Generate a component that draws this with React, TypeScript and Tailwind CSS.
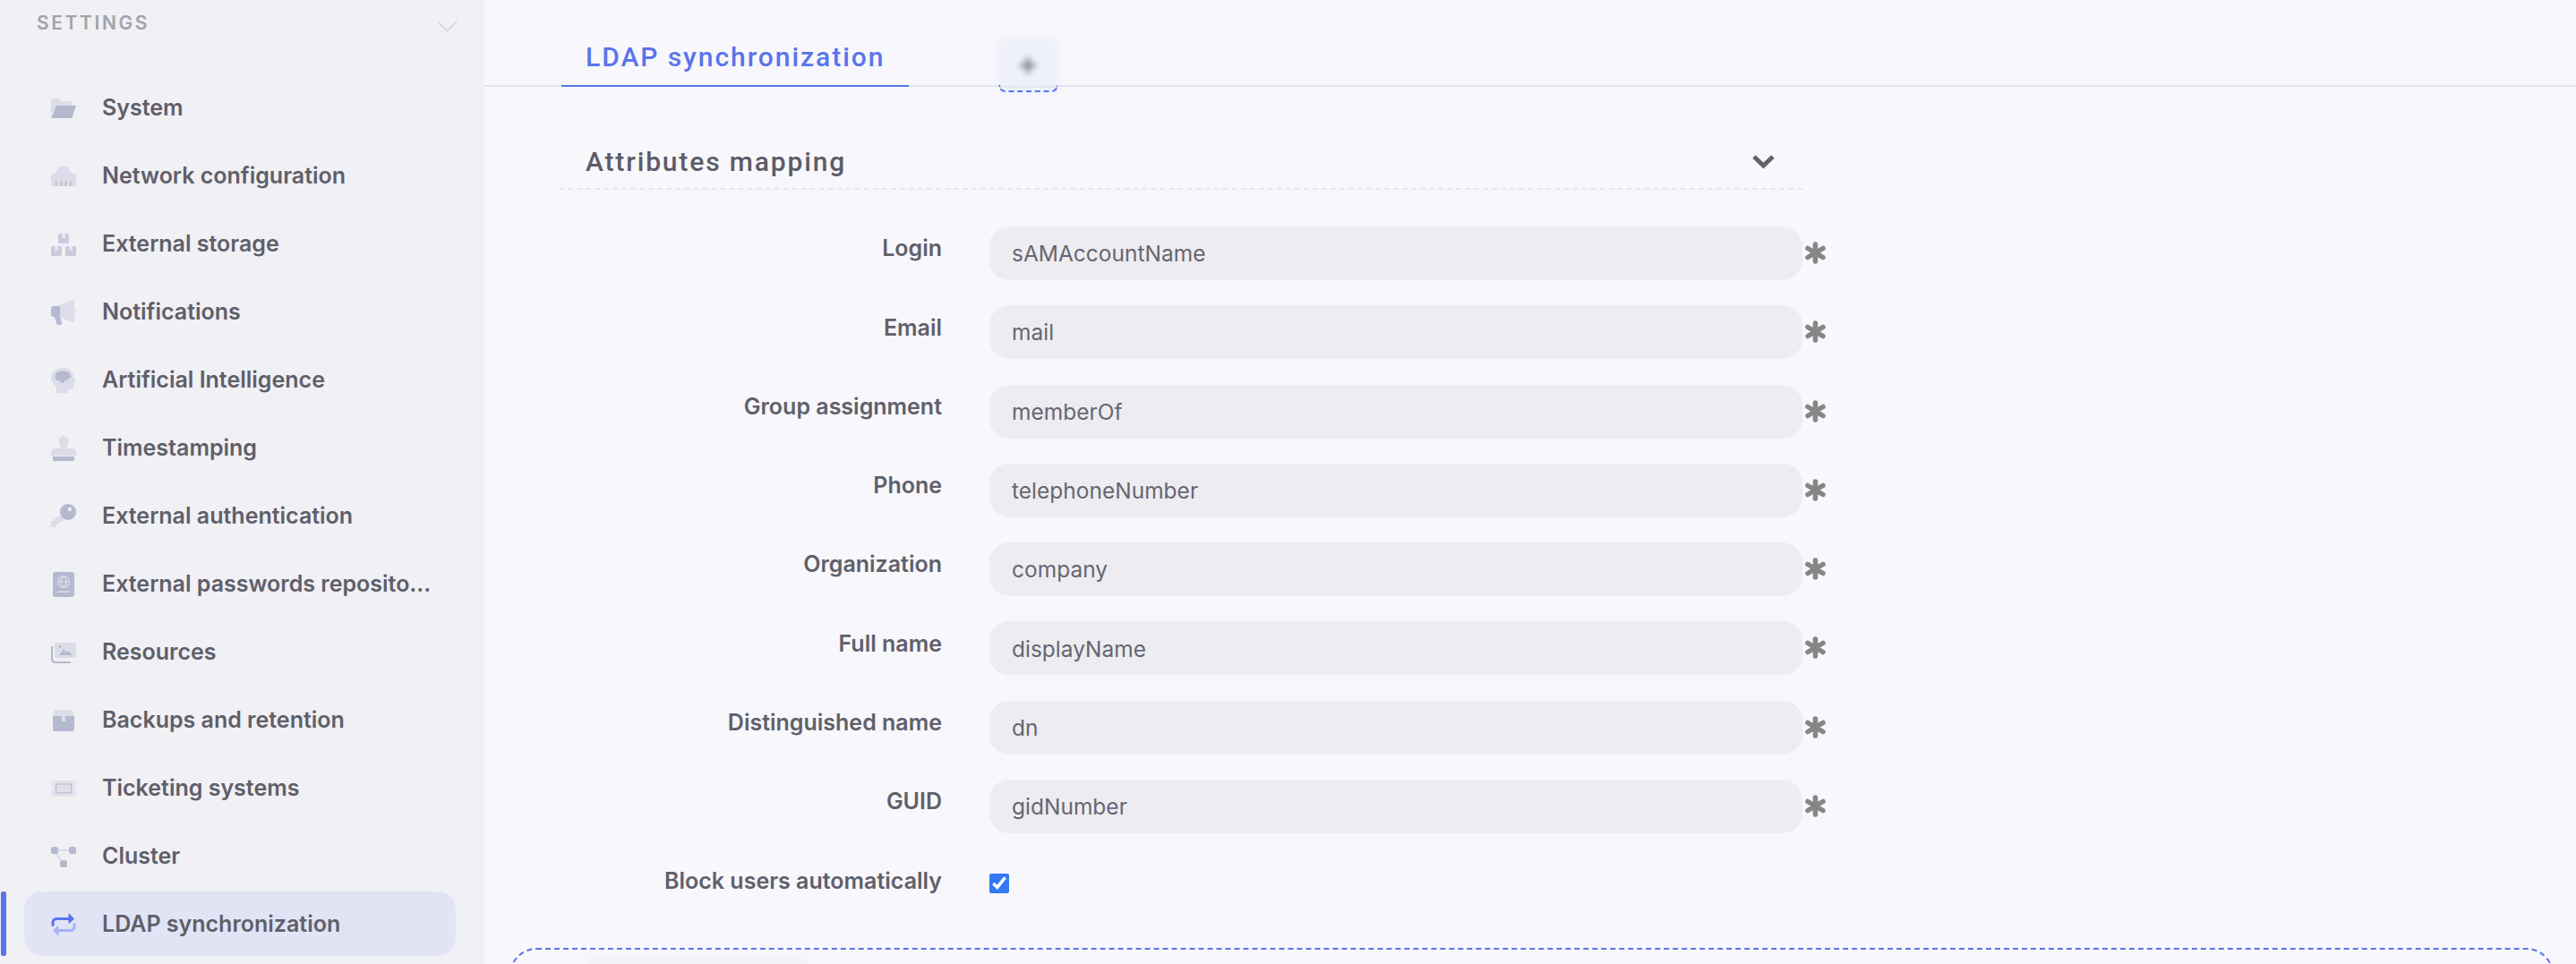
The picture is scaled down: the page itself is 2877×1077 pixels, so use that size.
import * as React from 'react'

const L = '#dcdde8'
const D = '#b5b9cf'

function Glyph({ children }: { children: React.ReactNode }) {
  return (
    <svg viewBox="0 0 28 28" className="w-[28px] h-[28px] shrink-0 overflow-visible">
      {children}
    </svg>
  )
}

function Asterisk() {
  return (
    <svg viewBox="0 0 25 25" className="ml-[2px] mt-[17px] w-[25px] h-[25px] shrink-0">
      <path d="M12.500 3v19M4 7.500l17 10M21 7.500l-17 10" fill="none" stroke="#868686" strokeWidth="5.500" strokeLinecap="round" />
    </svg>
  )
}

const icons: Record<string, React.ReactNode> = {
  folder: (
    <>
      <path d="M0 6q0-2 2-2h7l3 3h10q2 0 2 2v3H7l-7 10z" fill={L} />
      <path d="M6 12h22l-4 12q-.5 2-2 2H0z" fill={D} />
    </>
  ),
  network: (
    <>
      <path d="M8 6q0-2 2-2h8q2 0 2 2v3h3v3h3q2 0 2 2v12H0V14q0-2 2-2h3V9h3z" fill={L} />
      <path d="M5 20h1.400v6H5zM10.400 20h1.400v6h-1.400zM15.800 20h1.400v6h-1.400zM21.200 20h1.400v6h-1.400z" fill={D} />
    </>
  ),
  storage: (
    <>
      <rect x="8" y="3" width="12" height="11" rx="1.500" fill="#c9cbdc" />
      <rect x="0" y="17" width="12" height="11" rx="1.500" fill="#c9cbdc" />
      <rect x="16" y="17" width="12" height="11" rx="1.500" fill="#c9cbdc" />
      <path d="M12 3h4v6l-2-1.500L12 9zM4 17h4v6l-2-1.500L4 23zM20 17h4v6l-2-1.500L20 23z" fill="#e4e5ee" />
    </>
  ),
  megaphone: (
    <>
      <path d="M9 7l15-6q2-.5 2 1.500v22q0 2-2 1.500L9 20zM26 11q2 .5 2 3t-2 3z" fill={L} />
      <path d="M3 8h7v12H3q-3 0-3-3v-6q0-3 3-3zM4 20h6l2 6q.5 3-2 3H8q-1.500 0-2-2z" fill={D} />
    </>
  ),
  brain: (
    <>
      <path d="M13 1c8 0 12 5 12 10l3 5q.5 1.500-1 2h-2v5q0 2-3 2h-3v4H6v-7C2 19 0 15 0 12 0 6 5 1 13 1z" fill={L} />
      <path d="M5 9q1-4 5-4 3-2 6 0 5 0 6 5 0 3-3 3-1 3-4 2l-1 3h-3l-1-3q-4 1-5-2-1-2 0-4z" fill={D} />
    </>
  ),
  stamp: (
    <>
      <path d="M14 1a5.500 5.500 0 0 1 5 8q-2 3-1 6h5q5 0 5 5v3H0v-3q0-5 5-5h5q1-3-1-6a5.500 5.500 0 0 1 5-8z" fill={L} />
      <rect x="2" y="24" width="24" height="5" fill={D} />
    </>
  ),
  key: (
    <>
      <path d="M10 13l5 5-3 3H9v3H6v3H0v-6z" fill={L} />
      <circle cx="19" cy="10" r="9" fill={D} />
      <circle cx="21" cy="7" r="2.200" fill="#eceef5" />
    </>
  ),
  passport: (
    <>
      <rect x="2" y="1" width="24" height="28" rx="3" fill={D} />
      <circle cx="14" cy="12" r="6.500" fill="none" stroke={L} strokeWidth="1.200" />
      <path d="M14 5.500c-4 3.500-4 9.500 0 13 4-3.500 4-9.500 0-13zM7.500 12h13" fill="none" stroke={L} strokeWidth="1.200" />
      <rect x="7" y="22.500" width="14" height="1.500" fill={L} />
    </>
  ),
  images: (
    <>
      <rect x="4" y="4" width="24" height="17" rx="2" fill={L} />
      <path d="M1 8v14q0 4 4 4h17" fill="none" stroke={D} strokeWidth="2" />
      <path d="M9 18l5-7 3 4 2-2 5 5z" fill={D} />
      <circle cx="10" cy="8.500" r="1.300" fill={D} />
    </>
  ),
  box: (
    <>
      <path d="M2 10l2-6q.5-1 2-1h6v7zM26 10l-2-6q-.5-1-2-1h-6v7z" fill={L} />
      <path d="M2 10h10v5q0 1 1 1h2q1 0 1-1v-5h10v15q0 2-2 2H4q-2 0-2-2z" fill={D} />
      <path d="M12 3h4v11q0 2-2 2t-2-2z" fill={L} />
    </>
  ),
  ticket: (
    <>
      <path d="M2 6h24q2 0 2 2v4q-2 .5-2 3t2 3v4q0 2-2 2H2q-2 0-2-2v-4q2-.5 2-3t-2-3V8q0-2 2-2z" fill="#e2e3ec" />
      <rect x="5.500" y="10" width="17" height="10" fill="#dfe0ea" stroke={D} strokeWidth="1" />
    </>
  ),
  cluster: (
    <>
      <path d="M6 8h16M5 10l7 11" stroke={L} strokeWidth="2" fill="none" />
      <rect x="0" y="4" width="8" height="8" rx="2.500" fill={D} />
      <rect x="20" y="4" width="8" height="8" rx="2.500" fill={D} />
      <rect x="10" y="19" width="8" height="8" rx="2.500" fill={D} />
    </>
  ),
  sync: (
    <>
      <path d="M2 15.500v-2.500q0-4.500 4.500-4.500H21" fill="none" stroke="#5a74ea" strokeWidth="3" strokeLinecap="round" />
      <path d="M19.500 2l6.500 6.500-6.500 6z" fill="#5a74ea" />
      <path d="M26 14.500v2.500q0 4.500-4.500 4.500H7" fill="none" stroke="#a6b4f4" strokeWidth="3" strokeLinecap="round" />
      <path d="M8.500 15.500l-6.500 6 6.500 6.500z" fill="#a6b4f4" />
    </>
  ),
}

const navItems = [
  { label: 'System', icon: 'folder' },
  { label: 'Network configuration', icon: 'network' },
  { label: 'External storage', icon: 'storage' },
  { label: 'Notifications', icon: 'megaphone' },
  { label: 'Artificial Intelligence', icon: 'brain' },
  { label: 'Timestamping', icon: 'stamp' },
  { label: 'External authentication', icon: 'key' },
  { label: 'External passwords reposito...', icon: 'passport' },
  { label: 'Resources', icon: 'images' },
  { label: 'Backups and retention', icon: 'box' },
  { label: 'Ticketing systems', icon: 'ticket' },
  { label: 'Cluster', icon: 'cluster' },
  { label: 'LDAP synchronization', icon: 'sync', active: true },
]

const fields = [
  { label: 'Login', value: 'sAMAccountName' },
  { label: 'Email', value: 'mail' },
  { label: 'Group assignment', value: 'memberOf' },
  { label: 'Phone', value: 'telephoneNumber' },
  { label: 'Organization', value: 'company' },
  { label: 'Full name', value: 'displayName' },
  { label: 'Distinguished name', value: 'dn' },
  { label: 'GUID', value: 'gidNumber' },
]

export default function App() {
  return (
    <div className="flex w-[2877px] h-[1077px] overflow-hidden bg-[#f7f7fc] font-['Inter',sans-serif]">
      <aside className="w-[541px] shrink-0 bg-[#f0f0f5]">
        <div className="flex justify-between pl-[41px] pr-[30px] h-[84px]">
          <span className="mt-[13px] text-[21px] leading-[26px] font-semibold tracking-[2.6px] text-[#a3a3a8]">SETTINGS</span>
          <svg viewBox="0 0 23 13" className="mt-[23px] w-[23px] h-[13px]">
            <path d="M1 1l10.500 10.500L22 1" fill="none" stroke="#d9dae3" strokeWidth="2" />
          </svg>
        </div>
        <nav className="flex flex-col gap-[4px]">
          {navItems.map(item => (
            <div key={item.label} className="relative h-[72px] pl-[27px] pr-[32px]">
              {item.active && <span className="absolute left-[1px] top-0 w-[6px] h-full rounded-[2px] bg-[#5a74ea]" />}
              <div className={`flex items-center h-full pl-[30px] gap-[29px] rounded-[20px] ${item.active ? 'bg-[#e1e4f5]' : ''}`}>
                <Glyph>{icons[item.icon]}</Glyph>
                <span className="whitespace-nowrap text-[25px] leading-[32px] font-semibold text-[#5f5f69]">{item.label}</span>
              </div>
            </div>
          ))}
        </nav>
      </aside>

      <main className="flex-1 min-w-0">
        <div className="relative h-[97px] border-b-2 border-[#e5e6ef] pl-[86px]">
          <div className="-mb-[2px] w-[388px] h-[97px] border-b-2 border-[#5a74ea] pl-[27px] pt-[45px]">
            <span className="block text-[30px] leading-[38px] font-medium tracking-[1.95px] text-[#5a74ea] font-['Roboto',sans-serif]">
              LDAP synchronization
            </span>
          </div>
          {/* the add button is blurred out in the capture */}
          <div className="absolute left-[574px] top-[43px] w-[67px] h-[60px]">
            <div className="absolute inset-x-0 top-0 h-[60px] rounded-[10px] bg-[#eef0fa] blur-[3px]" />
            <div className="absolute inset-x-0 top-[53px] h-[2px] bg-[#e5e6ef]" />
            <div className="absolute inset-x-0 bottom-0 h-[8px] rounded-b-[8px] border-2 border-t-0 border-dashed border-[#5a74ea]" />
            <div className="absolute left-[18px] top-[13px] w-[30px] h-[30px] text-[34px] leading-[30px] font-bold text-center text-[#808086] blur-[3px]">+</div>
          </div>
        </div>

        <div className="pl-[83px]">
          <div className="flex items-start justify-between w-[1389px] h-[115px] border-b-2 border-dashed border-[#e6e7ef] pl-[30px] pr-[30px]">
            <span className="mt-[65px] text-[30px] leading-[38px] font-medium tracking-[1.85px] text-[#5c5c66] font-['Roboto',sans-serif]">
              Attributes mapping
            </span>
            <svg viewBox="0 0 27 18" className="mt-[74px] w-[27px] h-[18px]">
              <path d="M3 4l10.500 10L24 4" fill="none" stroke="#62626c" strokeWidth="5" strokeLinejoin="miter" />
            </svg>
          </div>

          <div className="mt-[41px] flex flex-col gap-[28.3px]">
            {fields.map(field => (
              <div key={field.label} className="flex items-start">
                <label className="w-[428px] h-[50px] flex items-center justify-end text-[25px] font-semibold text-[#60606a]">
                  {field.label}
                </label>
                <div className="ml-[53px] w-[908px] h-[60px] flex items-center pl-[25px] pt-[1px] rounded-[22px] bg-[#edecf1] text-[24.5px] text-[#66666f]">
                  {field.value}
                </div>
                <Asterisk />
              </div>
            ))}
            <div className="flex items-start mt-[1px]">
              <label className="w-[428px] h-[49px] flex items-center justify-end text-[25px] font-semibold text-[#60606a] whitespace-nowrap">
                Block users automatically
              </label>
              <input type="checkbox" defaultChecked className="ml-[53px] mt-[16px] w-[22px] h-[22px] accent-[#3478f6]" />
            </div>
          </div>
        </div>

        <div className="relative mt-[50px] ml-[28px] w-[2283px] h-[200px] rounded-[30px] border-2 border-dashed border-[#5a74ea]">
          <div className="ml-[86px] mt-[8px] w-[245px] h-[24px] bg-[#f1f1f7] blur-[4px]" />
        </div>
      </main>
    </div>
  )
}
